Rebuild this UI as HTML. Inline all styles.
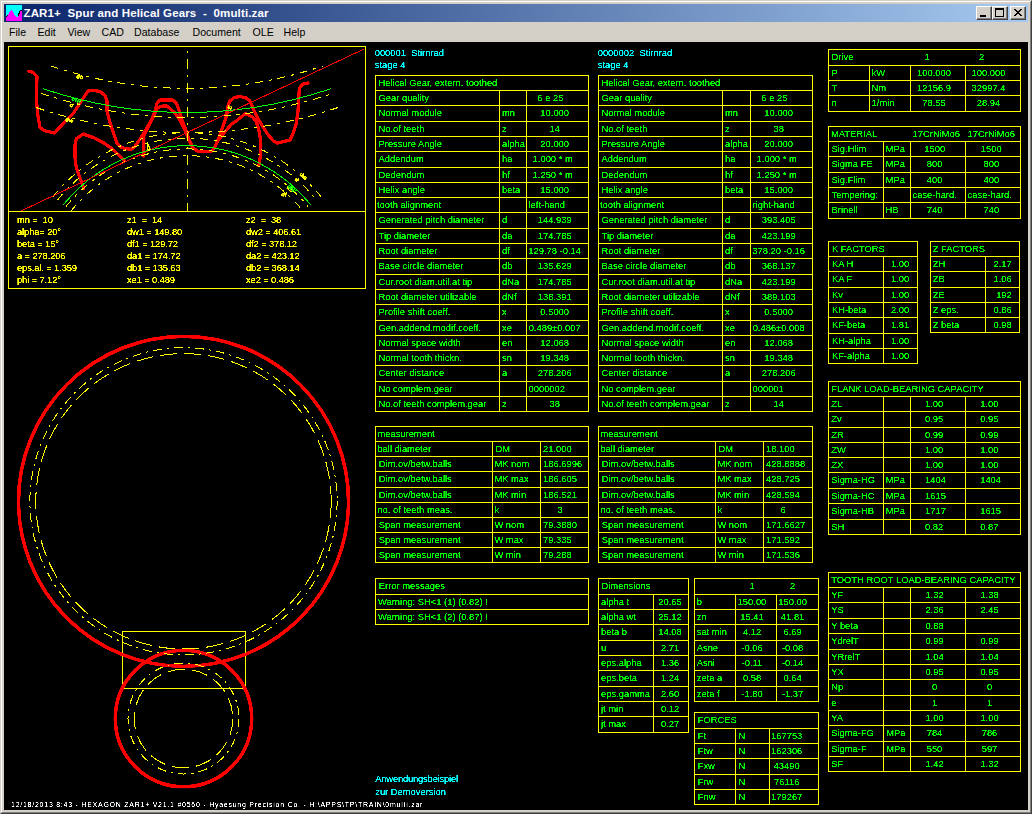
<!DOCTYPE html>
<html><head><meta charset="utf-8"><title>ZAR1+</title>
<style>
html,body{margin:0;padding:0}
body{width:1032px;height:814px;position:relative;overflow:hidden;background:#d4d0c8;font-family:"Liberation Sans",sans-serif}
.b{position:absolute}
#canvas{position:absolute;left:4px;top:42px;width:1024px;height:768px;background:#000;overflow:hidden;filter:url(#thr)}
#inner{position:absolute;left:-4px;top:-42px;width:1032px;height:814px;font-size:9.4px;line-height:1;color:#0f0}
#inner span{position:absolute;white-space:pre}
#title{position:absolute;left:4px;top:4px;width:1024px;height:18px;background:linear-gradient(to right,#0a246a,#a6caf0)}
#menu{position:absolute;left:0;top:0;font-size:10.6px;color:#000;line-height:13px}
.btn{position:absolute;top:2px;width:16px;height:14px;background:#d4d0c8;box-sizing:border-box;border:1px solid;border-color:#fff #404040 #404040 #fff;box-shadow:inset -1px -1px 0 #808080}
</style></head><body>
<svg width="0" height="0" style="position:absolute"><filter id="thr" x="0" y="0" width="100%" height="100%" color-interpolation-filters="sRGB"><feComponentTransfer><feFuncR type="table" tableValues="0 0 0 .25 .65 1 1 1 1 1 1"/><feFuncG type="table" tableValues="0 0 0 .25 .65 1 1 1 1 1 1"/><feFuncB type="table" tableValues="0 0 0 .25 .65 1 1 1 1 1 1"/></feComponentTransfer></filter><filter id="thg" x="0" y="0" width="100%" height="100%" color-interpolation-filters="sRGB"><feComponentTransfer><feFuncR type="discrete" tableValues="0 0 0 0 0 0 0 0 .78 .78 .78 .78 .78 .78 .78 .78 .78 .78 .78 .78"/><feFuncG type="discrete" tableValues="0 0 0 0 0 0 0 0 .78 .78 .78 .78 .78 .78 .78 .78 .78 .78 .78 .78"/><feFuncB type="discrete" tableValues="0 0 0 0 0 0 0 0 .78 .78 .78 .78 .78 .78 .78 .78 .78 .78 .78 .78"/></feComponentTransfer></filter></svg>
<div class="b" style="left:0;top:0;width:1032px;height:814px;box-sizing:border-box;border:1px solid;border-color:#d4d0c8 #404040 #404040 #d4d0c8"></div>
<div class="b" style="left:1px;top:1px;width:1030px;height:812px;box-sizing:border-box;border:1px solid;border-color:#fff #808080 #808080 #fff"></div>
<div id="title">
<svg class="b" style="left:2px;top:1px" width="16" height="16" shape-rendering="crispEdges"><rect width="16" height="16" fill="#0ff"/><path d="M0,16 V12 L1,11 L2,10 L3,8 L4,6 L5,5 L6,5 L7,7 L8,9 L9,11 L10,12 L11,12 L12,11 L13,8 L14,6 L16,5 V16 Z" fill="#f0f"/><path d="M0,12 L2,10 M12,11 L14,6 L16,5" stroke="#000" stroke-width="1" fill="none"/></svg>
<span class="b" style="left:19.5px;top:2px;color:#fff;font-weight:bold;font-size:11.5px;line-height:14px;white-space:pre;letter-spacing:0.13px">ZAR1+  Spur and Helical Gears  -  0multi.zar</span>
<div class="btn" style="left:972px"><div class="b" style="left:3px;top:8px;width:6px;height:2px;background:#000"></div></div>
<div class="btn" style="left:988px"><div class="b" style="left:2px;top:1px;width:9px;height:9px;box-sizing:border-box;border:1px solid #000;border-top-width:2px"></div></div>
<div class="btn" style="left:1006px"><svg class="b" style="left:3px;top:2px" width="8" height="7" shape-rendering="crispEdges"><path d="M0,0 L7,7 M1,0 L8,7 M7,0 L0,7 M8,0 L1,7" stroke="#000" stroke-width="1"/></svg></div>
</div>
<div id="menu"><span style="position:absolute;left:9px;top:26px">File</span><span style="position:absolute;left:37.5px;top:26px">Edit</span><span style="position:absolute;left:67.5px;top:26px">View</span><span style="position:absolute;left:101.5px;top:26px">CAD</span><span style="position:absolute;left:134px;top:26px">Database</span><span style="position:absolute;left:192.5px;top:26px">Document</span><span style="position:absolute;left:252.5px;top:26px">OLE</span><span style="position:absolute;left:283.5px;top:26px">Help</span></div>
<div id="canvas"><div id="inner">
<svg width="1032" height="814" style="position:absolute;left:0;top:0" shape-rendering="crispEdges">
<defs><clipPath id="cz"><rect x="9" y="47" width="356" height="164"/></clipPath></defs>
<rect x="375" y="75" width="214" height="1" fill="#ff0"/><rect x="375" y="90" width="214" height="1" fill="#ff0"/><rect x="375" y="105" width="214" height="1" fill="#ff0"/><rect x="375" y="121" width="214" height="1" fill="#ff0"/><rect x="375" y="136" width="214" height="1" fill="#ff0"/><rect x="375" y="151" width="214" height="1" fill="#ff0"/><rect x="375" y="167" width="214" height="1" fill="#ff0"/><rect x="375" y="182" width="214" height="1" fill="#ff0"/><rect x="375" y="197" width="214" height="1" fill="#ff0"/><rect x="375" y="212" width="214" height="1" fill="#ff0"/><rect x="375" y="228" width="214" height="1" fill="#ff0"/><rect x="375" y="243" width="214" height="1" fill="#ff0"/><rect x="375" y="258" width="214" height="1" fill="#ff0"/><rect x="375" y="274" width="214" height="1" fill="#ff0"/><rect x="375" y="289" width="214" height="1" fill="#ff0"/><rect x="375" y="304" width="214" height="1" fill="#ff0"/><rect x="375" y="320" width="214" height="1" fill="#ff0"/><rect x="375" y="335" width="214" height="1" fill="#ff0"/><rect x="375" y="350" width="214" height="1" fill="#ff0"/><rect x="375" y="365" width="214" height="1" fill="#ff0"/><rect x="375" y="381" width="214" height="1" fill="#ff0"/><rect x="375" y="396" width="214" height="1" fill="#ff0"/><rect x="375" y="411" width="214" height="1" fill="#ff0"/><rect x="375" y="75" width="1" height="337" fill="#ff0"/><rect x="588" y="75" width="1" height="337" fill="#ff0"/><rect x="499" y="90" width="1" height="16" fill="#ff0"/><rect x="526" y="90" width="1" height="16" fill="#ff0"/><rect x="499" y="105" width="1" height="17" fill="#ff0"/><rect x="526" y="105" width="1" height="17" fill="#ff0"/><rect x="499" y="121" width="1" height="16" fill="#ff0"/><rect x="526" y="121" width="1" height="16" fill="#ff0"/><rect x="499" y="136" width="1" height="16" fill="#ff0"/><rect x="526" y="136" width="1" height="16" fill="#ff0"/><rect x="499" y="151" width="1" height="17" fill="#ff0"/><rect x="526" y="151" width="1" height="17" fill="#ff0"/><rect x="499" y="167" width="1" height="16" fill="#ff0"/><rect x="526" y="167" width="1" height="16" fill="#ff0"/><rect x="499" y="182" width="1" height="16" fill="#ff0"/><rect x="526" y="182" width="1" height="16" fill="#ff0"/><rect x="499" y="197" width="1" height="16" fill="#ff0"/><rect x="526" y="197" width="1" height="16" fill="#ff0"/><rect x="499" y="212" width="1" height="17" fill="#ff0"/><rect x="526" y="212" width="1" height="17" fill="#ff0"/><rect x="499" y="228" width="1" height="16" fill="#ff0"/><rect x="526" y="228" width="1" height="16" fill="#ff0"/><rect x="499" y="243" width="1" height="16" fill="#ff0"/><rect x="526" y="243" width="1" height="16" fill="#ff0"/><rect x="499" y="258" width="1" height="17" fill="#ff0"/><rect x="526" y="258" width="1" height="17" fill="#ff0"/><rect x="499" y="274" width="1" height="16" fill="#ff0"/><rect x="526" y="274" width="1" height="16" fill="#ff0"/><rect x="499" y="289" width="1" height="16" fill="#ff0"/><rect x="526" y="289" width="1" height="16" fill="#ff0"/><rect x="499" y="304" width="1" height="17" fill="#ff0"/><rect x="526" y="304" width="1" height="17" fill="#ff0"/><rect x="499" y="320" width="1" height="16" fill="#ff0"/><rect x="526" y="320" width="1" height="16" fill="#ff0"/><rect x="499" y="335" width="1" height="16" fill="#ff0"/><rect x="526" y="335" width="1" height="16" fill="#ff0"/><rect x="499" y="350" width="1" height="16" fill="#ff0"/><rect x="526" y="350" width="1" height="16" fill="#ff0"/><rect x="499" y="365" width="1" height="17" fill="#ff0"/><rect x="526" y="365" width="1" height="17" fill="#ff0"/><rect x="499" y="381" width="1" height="16" fill="#ff0"/><rect x="526" y="381" width="1" height="16" fill="#ff0"/><rect x="499" y="396" width="1" height="16" fill="#ff0"/><rect x="526" y="396" width="1" height="16" fill="#ff0"/><rect x="598" y="75" width="215" height="1" fill="#ff0"/><rect x="598" y="90" width="215" height="1" fill="#ff0"/><rect x="598" y="105" width="215" height="1" fill="#ff0"/><rect x="598" y="121" width="215" height="1" fill="#ff0"/><rect x="598" y="136" width="215" height="1" fill="#ff0"/><rect x="598" y="151" width="215" height="1" fill="#ff0"/><rect x="598" y="167" width="215" height="1" fill="#ff0"/><rect x="598" y="182" width="215" height="1" fill="#ff0"/><rect x="598" y="197" width="215" height="1" fill="#ff0"/><rect x="598" y="212" width="215" height="1" fill="#ff0"/><rect x="598" y="228" width="215" height="1" fill="#ff0"/><rect x="598" y="243" width="215" height="1" fill="#ff0"/><rect x="598" y="258" width="215" height="1" fill="#ff0"/><rect x="598" y="274" width="215" height="1" fill="#ff0"/><rect x="598" y="289" width="215" height="1" fill="#ff0"/><rect x="598" y="304" width="215" height="1" fill="#ff0"/><rect x="598" y="320" width="215" height="1" fill="#ff0"/><rect x="598" y="335" width="215" height="1" fill="#ff0"/><rect x="598" y="350" width="215" height="1" fill="#ff0"/><rect x="598" y="365" width="215" height="1" fill="#ff0"/><rect x="598" y="381" width="215" height="1" fill="#ff0"/><rect x="598" y="396" width="215" height="1" fill="#ff0"/><rect x="598" y="411" width="215" height="1" fill="#ff0"/><rect x="598" y="75" width="1" height="337" fill="#ff0"/><rect x="812" y="75" width="1" height="337" fill="#ff0"/><rect x="722" y="90" width="1" height="16" fill="#ff0"/><rect x="750" y="90" width="1" height="16" fill="#ff0"/><rect x="722" y="105" width="1" height="17" fill="#ff0"/><rect x="750" y="105" width="1" height="17" fill="#ff0"/><rect x="722" y="121" width="1" height="16" fill="#ff0"/><rect x="750" y="121" width="1" height="16" fill="#ff0"/><rect x="722" y="136" width="1" height="16" fill="#ff0"/><rect x="750" y="136" width="1" height="16" fill="#ff0"/><rect x="722" y="151" width="1" height="17" fill="#ff0"/><rect x="750" y="151" width="1" height="17" fill="#ff0"/><rect x="722" y="167" width="1" height="16" fill="#ff0"/><rect x="750" y="167" width="1" height="16" fill="#ff0"/><rect x="722" y="182" width="1" height="16" fill="#ff0"/><rect x="750" y="182" width="1" height="16" fill="#ff0"/><rect x="722" y="197" width="1" height="16" fill="#ff0"/><rect x="750" y="197" width="1" height="16" fill="#ff0"/><rect x="722" y="212" width="1" height="17" fill="#ff0"/><rect x="750" y="212" width="1" height="17" fill="#ff0"/><rect x="722" y="228" width="1" height="16" fill="#ff0"/><rect x="750" y="228" width="1" height="16" fill="#ff0"/><rect x="722" y="243" width="1" height="16" fill="#ff0"/><rect x="750" y="243" width="1" height="16" fill="#ff0"/><rect x="722" y="258" width="1" height="17" fill="#ff0"/><rect x="750" y="258" width="1" height="17" fill="#ff0"/><rect x="722" y="274" width="1" height="16" fill="#ff0"/><rect x="750" y="274" width="1" height="16" fill="#ff0"/><rect x="722" y="289" width="1" height="16" fill="#ff0"/><rect x="750" y="289" width="1" height="16" fill="#ff0"/><rect x="722" y="304" width="1" height="17" fill="#ff0"/><rect x="750" y="304" width="1" height="17" fill="#ff0"/><rect x="722" y="320" width="1" height="16" fill="#ff0"/><rect x="750" y="320" width="1" height="16" fill="#ff0"/><rect x="722" y="335" width="1" height="16" fill="#ff0"/><rect x="750" y="335" width="1" height="16" fill="#ff0"/><rect x="722" y="350" width="1" height="16" fill="#ff0"/><rect x="750" y="350" width="1" height="16" fill="#ff0"/><rect x="722" y="365" width="1" height="17" fill="#ff0"/><rect x="750" y="365" width="1" height="17" fill="#ff0"/><rect x="722" y="381" width="1" height="16" fill="#ff0"/><rect x="750" y="381" width="1" height="16" fill="#ff0"/><rect x="722" y="396" width="1" height="16" fill="#ff0"/><rect x="750" y="396" width="1" height="16" fill="#ff0"/><rect x="375" y="426" width="214" height="1" fill="#ff0"/><rect x="375" y="441" width="214" height="1" fill="#ff0"/><rect x="375" y="456" width="214" height="1" fill="#ff0"/><rect x="375" y="471" width="214" height="1" fill="#ff0"/><rect x="375" y="487" width="214" height="1" fill="#ff0"/><rect x="375" y="502" width="214" height="1" fill="#ff0"/><rect x="375" y="517" width="214" height="1" fill="#ff0"/><rect x="375" y="532" width="214" height="1" fill="#ff0"/><rect x="375" y="547" width="214" height="1" fill="#ff0"/><rect x="375" y="562" width="214" height="1" fill="#ff0"/><rect x="375" y="426" width="1" height="137" fill="#ff0"/><rect x="588" y="426" width="1" height="137" fill="#ff0"/><rect x="492" y="441" width="1" height="16" fill="#ff0"/><rect x="540" y="441" width="1" height="16" fill="#ff0"/><rect x="492" y="456" width="1" height="16" fill="#ff0"/><rect x="540" y="456" width="1" height="16" fill="#ff0"/><rect x="492" y="471" width="1" height="17" fill="#ff0"/><rect x="540" y="471" width="1" height="17" fill="#ff0"/><rect x="492" y="487" width="1" height="16" fill="#ff0"/><rect x="540" y="487" width="1" height="16" fill="#ff0"/><rect x="492" y="502" width="1" height="16" fill="#ff0"/><rect x="540" y="502" width="1" height="16" fill="#ff0"/><rect x="492" y="517" width="1" height="16" fill="#ff0"/><rect x="540" y="517" width="1" height="16" fill="#ff0"/><rect x="492" y="532" width="1" height="16" fill="#ff0"/><rect x="540" y="532" width="1" height="16" fill="#ff0"/><rect x="492" y="547" width="1" height="16" fill="#ff0"/><rect x="540" y="547" width="1" height="16" fill="#ff0"/><rect x="598" y="426" width="215" height="1" fill="#ff0"/><rect x="598" y="441" width="215" height="1" fill="#ff0"/><rect x="598" y="456" width="215" height="1" fill="#ff0"/><rect x="598" y="471" width="215" height="1" fill="#ff0"/><rect x="598" y="487" width="215" height="1" fill="#ff0"/><rect x="598" y="502" width="215" height="1" fill="#ff0"/><rect x="598" y="517" width="215" height="1" fill="#ff0"/><rect x="598" y="532" width="215" height="1" fill="#ff0"/><rect x="598" y="547" width="215" height="1" fill="#ff0"/><rect x="598" y="562" width="215" height="1" fill="#ff0"/><rect x="598" y="426" width="1" height="137" fill="#ff0"/><rect x="812" y="426" width="1" height="137" fill="#ff0"/><rect x="715" y="441" width="1" height="16" fill="#ff0"/><rect x="763" y="441" width="1" height="16" fill="#ff0"/><rect x="715" y="456" width="1" height="16" fill="#ff0"/><rect x="763" y="456" width="1" height="16" fill="#ff0"/><rect x="715" y="471" width="1" height="17" fill="#ff0"/><rect x="763" y="471" width="1" height="17" fill="#ff0"/><rect x="715" y="487" width="1" height="16" fill="#ff0"/><rect x="763" y="487" width="1" height="16" fill="#ff0"/><rect x="715" y="502" width="1" height="16" fill="#ff0"/><rect x="763" y="502" width="1" height="16" fill="#ff0"/><rect x="715" y="517" width="1" height="16" fill="#ff0"/><rect x="763" y="517" width="1" height="16" fill="#ff0"/><rect x="715" y="532" width="1" height="16" fill="#ff0"/><rect x="763" y="532" width="1" height="16" fill="#ff0"/><rect x="715" y="547" width="1" height="16" fill="#ff0"/><rect x="763" y="547" width="1" height="16" fill="#ff0"/><rect x="375" y="578" width="214" height="1" fill="#ff0"/><rect x="375" y="594" width="214" height="1" fill="#ff0"/><rect x="375" y="609" width="214" height="1" fill="#ff0"/><rect x="375" y="624" width="214" height="1" fill="#ff0"/><rect x="375" y="578" width="1" height="47" fill="#ff0"/><rect x="588" y="578" width="1" height="47" fill="#ff0"/><rect x="598" y="578" width="91" height="1" fill="#ff0"/><rect x="598" y="594" width="91" height="1" fill="#ff0"/><rect x="598" y="609" width="91" height="1" fill="#ff0"/><rect x="598" y="624" width="91" height="1" fill="#ff0"/><rect x="598" y="640" width="91" height="1" fill="#ff0"/><rect x="598" y="655" width="91" height="1" fill="#ff0"/><rect x="598" y="670" width="91" height="1" fill="#ff0"/><rect x="598" y="686" width="91" height="1" fill="#ff0"/><rect x="598" y="701" width="91" height="1" fill="#ff0"/><rect x="598" y="716" width="91" height="1" fill="#ff0"/><rect x="598" y="732" width="91" height="1" fill="#ff0"/><rect x="598" y="578" width="1" height="155" fill="#ff0"/><rect x="688" y="578" width="1" height="155" fill="#ff0"/><rect x="653" y="594" width="1" height="16" fill="#ff0"/><rect x="653" y="609" width="1" height="16" fill="#ff0"/><rect x="653" y="624" width="1" height="17" fill="#ff0"/><rect x="653" y="640" width="1" height="16" fill="#ff0"/><rect x="653" y="655" width="1" height="16" fill="#ff0"/><rect x="653" y="670" width="1" height="17" fill="#ff0"/><rect x="653" y="686" width="1" height="16" fill="#ff0"/><rect x="653" y="701" width="1" height="16" fill="#ff0"/><rect x="653" y="716" width="1" height="17" fill="#ff0"/><rect x="694" y="578" width="125" height="1" fill="#ff0"/><rect x="694" y="594" width="125" height="1" fill="#ff0"/><rect x="694" y="609" width="125" height="1" fill="#ff0"/><rect x="694" y="624" width="125" height="1" fill="#ff0"/><rect x="694" y="640" width="125" height="1" fill="#ff0"/><rect x="694" y="655" width="125" height="1" fill="#ff0"/><rect x="694" y="670" width="125" height="1" fill="#ff0"/><rect x="694" y="686" width="125" height="1" fill="#ff0"/><rect x="694" y="701" width="125" height="1" fill="#ff0"/><rect x="694" y="578" width="1" height="124" fill="#ff0"/><rect x="818" y="578" width="1" height="124" fill="#ff0"/><rect x="735" y="594" width="1" height="16" fill="#ff0"/><rect x="776" y="594" width="1" height="16" fill="#ff0"/><rect x="735" y="609" width="1" height="16" fill="#ff0"/><rect x="776" y="609" width="1" height="16" fill="#ff0"/><rect x="735" y="624" width="1" height="17" fill="#ff0"/><rect x="776" y="624" width="1" height="17" fill="#ff0"/><rect x="735" y="640" width="1" height="16" fill="#ff0"/><rect x="776" y="640" width="1" height="16" fill="#ff0"/><rect x="735" y="655" width="1" height="16" fill="#ff0"/><rect x="776" y="655" width="1" height="16" fill="#ff0"/><rect x="735" y="670" width="1" height="17" fill="#ff0"/><rect x="776" y="670" width="1" height="17" fill="#ff0"/><rect x="735" y="686" width="1" height="16" fill="#ff0"/><rect x="776" y="686" width="1" height="16" fill="#ff0"/><rect x="694" y="712" width="125" height="1" fill="#ff0"/><rect x="694" y="728" width="125" height="1" fill="#ff0"/><rect x="694" y="743" width="125" height="1" fill="#ff0"/><rect x="694" y="758" width="125" height="1" fill="#ff0"/><rect x="694" y="774" width="125" height="1" fill="#ff0"/><rect x="694" y="789" width="125" height="1" fill="#ff0"/><rect x="694" y="804" width="125" height="1" fill="#ff0"/><rect x="694" y="712" width="1" height="93" fill="#ff0"/><rect x="818" y="712" width="1" height="93" fill="#ff0"/><rect x="735" y="728" width="1" height="16" fill="#ff0"/><rect x="769" y="728" width="1" height="16" fill="#ff0"/><rect x="735" y="743" width="1" height="16" fill="#ff0"/><rect x="769" y="743" width="1" height="16" fill="#ff0"/><rect x="735" y="758" width="1" height="17" fill="#ff0"/><rect x="769" y="758" width="1" height="17" fill="#ff0"/><rect x="735" y="774" width="1" height="16" fill="#ff0"/><rect x="769" y="774" width="1" height="16" fill="#ff0"/><rect x="735" y="789" width="1" height="16" fill="#ff0"/><rect x="769" y="789" width="1" height="16" fill="#ff0"/><rect x="828" y="49" width="193" height="1" fill="#ff0"/><rect x="828" y="65" width="193" height="1" fill="#ff0"/><rect x="828" y="80" width="193" height="1" fill="#ff0"/><rect x="828" y="95" width="193" height="1" fill="#ff0"/><rect x="828" y="111" width="193" height="1" fill="#ff0"/><rect x="828" y="49" width="1" height="63" fill="#ff0"/><rect x="1020" y="49" width="1" height="63" fill="#ff0"/><rect x="869" y="65" width="1" height="16" fill="#ff0"/><rect x="910" y="65" width="1" height="16" fill="#ff0"/><rect x="965" y="65" width="1" height="16" fill="#ff0"/><rect x="869" y="80" width="1" height="16" fill="#ff0"/><rect x="910" y="80" width="1" height="16" fill="#ff0"/><rect x="965" y="80" width="1" height="16" fill="#ff0"/><rect x="869" y="95" width="1" height="17" fill="#ff0"/><rect x="910" y="95" width="1" height="17" fill="#ff0"/><rect x="965" y="95" width="1" height="17" fill="#ff0"/><rect x="828" y="126" width="193" height="1" fill="#ff0"/><rect x="828" y="141" width="193" height="1" fill="#ff0"/><rect x="828" y="156" width="193" height="1" fill="#ff0"/><rect x="828" y="172" width="193" height="1" fill="#ff0"/><rect x="828" y="187" width="193" height="1" fill="#ff0"/><rect x="828" y="202" width="193" height="1" fill="#ff0"/><rect x="828" y="218" width="193" height="1" fill="#ff0"/><rect x="828" y="126" width="1" height="93" fill="#ff0"/><rect x="1020" y="126" width="1" height="93" fill="#ff0"/><rect x="883" y="141" width="1" height="16" fill="#ff0"/><rect x="910" y="141" width="1" height="16" fill="#ff0"/><rect x="965" y="141" width="1" height="16" fill="#ff0"/><rect x="883" y="156" width="1" height="17" fill="#ff0"/><rect x="910" y="156" width="1" height="17" fill="#ff0"/><rect x="965" y="156" width="1" height="17" fill="#ff0"/><rect x="883" y="172" width="1" height="16" fill="#ff0"/><rect x="910" y="172" width="1" height="16" fill="#ff0"/><rect x="965" y="172" width="1" height="16" fill="#ff0"/><rect x="883" y="187" width="1" height="16" fill="#ff0"/><rect x="910" y="187" width="1" height="16" fill="#ff0"/><rect x="965" y="187" width="1" height="16" fill="#ff0"/><rect x="883" y="202" width="1" height="17" fill="#ff0"/><rect x="910" y="202" width="1" height="17" fill="#ff0"/><rect x="965" y="202" width="1" height="17" fill="#ff0"/><rect x="828" y="241" width="90" height="1" fill="#ff0"/><rect x="828" y="256" width="90" height="1" fill="#ff0"/><rect x="828" y="271" width="90" height="1" fill="#ff0"/><rect x="828" y="287" width="90" height="1" fill="#ff0"/><rect x="828" y="302" width="90" height="1" fill="#ff0"/><rect x="828" y="317" width="90" height="1" fill="#ff0"/><rect x="828" y="333" width="90" height="1" fill="#ff0"/><rect x="828" y="348" width="90" height="1" fill="#ff0"/><rect x="828" y="363" width="90" height="1" fill="#ff0"/><rect x="828" y="241" width="1" height="123" fill="#ff0"/><rect x="917" y="241" width="1" height="123" fill="#ff0"/><rect x="883" y="256" width="1" height="16" fill="#ff0"/><rect x="883" y="271" width="1" height="17" fill="#ff0"/><rect x="883" y="287" width="1" height="16" fill="#ff0"/><rect x="883" y="302" width="1" height="16" fill="#ff0"/><rect x="883" y="317" width="1" height="17" fill="#ff0"/><rect x="883" y="333" width="1" height="16" fill="#ff0"/><rect x="883" y="348" width="1" height="16" fill="#ff0"/><rect x="930" y="241" width="90" height="1" fill="#ff0"/><rect x="930" y="256" width="90" height="1" fill="#ff0"/><rect x="930" y="271" width="90" height="1" fill="#ff0"/><rect x="930" y="287" width="90" height="1" fill="#ff0"/><rect x="930" y="302" width="90" height="1" fill="#ff0"/><rect x="930" y="317" width="90" height="1" fill="#ff0"/><rect x="930" y="332" width="90" height="1" fill="#ff0"/><rect x="930" y="241" width="1" height="92" fill="#ff0"/><rect x="1019" y="241" width="1" height="92" fill="#ff0"/><rect x="985" y="256" width="1" height="16" fill="#ff0"/><rect x="985" y="271" width="1" height="17" fill="#ff0"/><rect x="985" y="287" width="1" height="16" fill="#ff0"/><rect x="985" y="302" width="1" height="16" fill="#ff0"/><rect x="985" y="317" width="1" height="16" fill="#ff0"/><rect x="828" y="381" width="193" height="1" fill="#ff0"/><rect x="828" y="396" width="193" height="1" fill="#ff0"/><rect x="828" y="411" width="193" height="1" fill="#ff0"/><rect x="828" y="427" width="193" height="1" fill="#ff0"/><rect x="828" y="442" width="193" height="1" fill="#ff0"/><rect x="828" y="457" width="193" height="1" fill="#ff0"/><rect x="828" y="472" width="193" height="1" fill="#ff0"/><rect x="828" y="488" width="193" height="1" fill="#ff0"/><rect x="828" y="503" width="193" height="1" fill="#ff0"/><rect x="828" y="519" width="193" height="1" fill="#ff0"/><rect x="828" y="534" width="193" height="1" fill="#ff0"/><rect x="828" y="381" width="1" height="154" fill="#ff0"/><rect x="1020" y="381" width="1" height="154" fill="#ff0"/><rect x="883" y="396" width="1" height="16" fill="#ff0"/><rect x="910" y="396" width="1" height="16" fill="#ff0"/><rect x="965" y="396" width="1" height="16" fill="#ff0"/><rect x="883" y="411" width="1" height="17" fill="#ff0"/><rect x="910" y="411" width="1" height="17" fill="#ff0"/><rect x="965" y="411" width="1" height="17" fill="#ff0"/><rect x="883" y="427" width="1" height="16" fill="#ff0"/><rect x="910" y="427" width="1" height="16" fill="#ff0"/><rect x="965" y="427" width="1" height="16" fill="#ff0"/><rect x="883" y="442" width="1" height="16" fill="#ff0"/><rect x="910" y="442" width="1" height="16" fill="#ff0"/><rect x="965" y="442" width="1" height="16" fill="#ff0"/><rect x="883" y="457" width="1" height="16" fill="#ff0"/><rect x="910" y="457" width="1" height="16" fill="#ff0"/><rect x="965" y="457" width="1" height="16" fill="#ff0"/><rect x="883" y="472" width="1" height="17" fill="#ff0"/><rect x="910" y="472" width="1" height="17" fill="#ff0"/><rect x="965" y="472" width="1" height="17" fill="#ff0"/><rect x="883" y="488" width="1" height="16" fill="#ff0"/><rect x="910" y="488" width="1" height="16" fill="#ff0"/><rect x="965" y="488" width="1" height="16" fill="#ff0"/><rect x="883" y="503" width="1" height="17" fill="#ff0"/><rect x="910" y="503" width="1" height="17" fill="#ff0"/><rect x="965" y="503" width="1" height="17" fill="#ff0"/><rect x="883" y="519" width="1" height="16" fill="#ff0"/><rect x="910" y="519" width="1" height="16" fill="#ff0"/><rect x="965" y="519" width="1" height="16" fill="#ff0"/><rect x="828" y="572" width="193" height="1" fill="#ff0"/><rect x="828" y="587" width="193" height="1" fill="#ff0"/><rect x="828" y="602" width="193" height="1" fill="#ff0"/><rect x="828" y="618" width="193" height="1" fill="#ff0"/><rect x="828" y="633" width="193" height="1" fill="#ff0"/><rect x="828" y="649" width="193" height="1" fill="#ff0"/><rect x="828" y="664" width="193" height="1" fill="#ff0"/><rect x="828" y="679" width="193" height="1" fill="#ff0"/><rect x="828" y="695" width="193" height="1" fill="#ff0"/><rect x="828" y="710" width="193" height="1" fill="#ff0"/><rect x="828" y="725" width="193" height="1" fill="#ff0"/><rect x="828" y="741" width="193" height="1" fill="#ff0"/><rect x="828" y="756" width="193" height="1" fill="#ff0"/><rect x="828" y="771" width="193" height="1" fill="#ff0"/><rect x="828" y="572" width="1" height="200" fill="#ff0"/><rect x="1020" y="572" width="1" height="200" fill="#ff0"/><rect x="883" y="587" width="1" height="16" fill="#ff0"/><rect x="910" y="587" width="1" height="16" fill="#ff0"/><rect x="965" y="587" width="1" height="16" fill="#ff0"/><rect x="883" y="602" width="1" height="17" fill="#ff0"/><rect x="910" y="602" width="1" height="17" fill="#ff0"/><rect x="965" y="602" width="1" height="17" fill="#ff0"/><rect x="883" y="618" width="1" height="16" fill="#ff0"/><rect x="910" y="618" width="1" height="16" fill="#ff0"/><rect x="965" y="618" width="1" height="16" fill="#ff0"/><rect x="883" y="633" width="1" height="17" fill="#ff0"/><rect x="910" y="633" width="1" height="17" fill="#ff0"/><rect x="965" y="633" width="1" height="17" fill="#ff0"/><rect x="883" y="649" width="1" height="16" fill="#ff0"/><rect x="910" y="649" width="1" height="16" fill="#ff0"/><rect x="965" y="649" width="1" height="16" fill="#ff0"/><rect x="883" y="664" width="1" height="16" fill="#ff0"/><rect x="910" y="664" width="1" height="16" fill="#ff0"/><rect x="965" y="664" width="1" height="16" fill="#ff0"/><rect x="883" y="679" width="1" height="17" fill="#ff0"/><rect x="910" y="679" width="1" height="17" fill="#ff0"/><rect x="965" y="679" width="1" height="17" fill="#ff0"/><rect x="883" y="695" width="1" height="16" fill="#ff0"/><rect x="910" y="695" width="1" height="16" fill="#ff0"/><rect x="965" y="695" width="1" height="16" fill="#ff0"/><rect x="883" y="710" width="1" height="16" fill="#ff0"/><rect x="910" y="710" width="1" height="16" fill="#ff0"/><rect x="965" y="710" width="1" height="16" fill="#ff0"/><rect x="883" y="725" width="1" height="17" fill="#ff0"/><rect x="910" y="725" width="1" height="17" fill="#ff0"/><rect x="965" y="725" width="1" height="17" fill="#ff0"/><rect x="883" y="741" width="1" height="16" fill="#ff0"/><rect x="910" y="741" width="1" height="16" fill="#ff0"/><rect x="965" y="741" width="1" height="16" fill="#ff0"/><rect x="883" y="756" width="1" height="16" fill="#ff0"/><rect x="910" y="756" width="1" height="16" fill="#ff0"/><rect x="965" y="756" width="1" height="16" fill="#ff0"/><rect x="8" y="46" width="358" height="1" fill="#ff0"/><rect x="8" y="211" width="358" height="1" fill="#ff0"/><rect x="8" y="288" width="358" height="1" fill="#ff0"/><rect x="8" y="46" width="1" height="243" fill="#ff0"/><rect x="365" y="46" width="1" height="243" fill="#ff0"/><rect x="122" y="631" width="124" height="1" fill="#ff0"/><rect x="122" y="688" width="124" height="1" fill="#ff0"/><rect x="122" y="631" width="1" height="58" fill="#ff0"/><rect x="245" y="631" width="1" height="58" fill="#ff0"/>
<g clip-path="url(#cz)" shape-rendering="geometricPrecision"><path d="M28.7,71.4 L33.0,72.3 L37.0,76.7 L36.6,87.4 L36.6,102.4 L38.0,116.0 L40.0,127.5 L44.3,130.6 L54.4,133.0 L63.0,123.7 L73.0,113.7 L82.0,100.0 L88.0,91.0 L93.0,90.2 L100.0,91.4 L105.0,95.5 L107.0,101.0 L107.0,111.0 L109.5,121.0 L113.3,132.5 L117.0,143.2 L120.8,147.0 L126.0,148.8 L131.3,149.2 L135.0,146.4 L140.0,139.0 L146.3,129.0 L152.0,119.0 L155.7,108.9 L157.0,103.2 L160.0,100.0 L166.4,99.7 L172.6,100.0 L176.4,103.2 L179.0,110.0 L182.0,120.0 L186.4,131.4 L189.0,140.0 L192.7,147.7 L197.7,151.2 L205.2,151.5 L211.5,151.2 L214.6,147.7 L218.4,139.0 L222.0,129.0 L226.0,117.6 L228.0,106.3 L229.6,101.3 L234.0,97.6 L240.3,96.6 L245.3,97.6 L249.7,100.7 L252.2,106.3 L256.0,115.0 L261.0,123.7 L267.3,133.7 L273.6,141.2 L277.4,143.1 L283.6,141.5 L290.0,140.0 L293.0,133.7 L296.2,123.7 L298.0,111.2 L298.7,98.6 L299.3,88.6 L302.4,84.2 L308.0,83.0" stroke="#f00" stroke-width="3.0" fill="none" stroke-linejoin="round" stroke-linecap="round"/><path d="M83.8,188.3 L79.4,176.4 L76.3,167.6 L75.0,157.6 L75.0,145.0 L76.3,138.8 L83.2,134.0 L93.2,137.5 L103.2,142.6 L112.0,148.8 L118.3,154.5 L124.5,160.7" stroke="#f00" stroke-width="3.0" fill="none" stroke-linejoin="round" stroke-linecap="round"/><path d="M143.8,156.0 L143.8,136.0 L148.0,127.0 L153.0,117.0 L157.6,107.6 L161.3,106.3 L166.4,105.7 L169.5,108.2 L175.0,113.2 L180.0,120.0 L185.0,130.0 L189.0,140.0 L192.7,147.7" stroke="#f00" stroke-width="3.0" fill="none" stroke-linejoin="round" stroke-linecap="round"/><path d="M217.0,142.0 L220.2,137.7 L225.3,131.4 L231.5,124.0 L236.0,121.2 L245.4,113.7 L252.3,116.8 L256.0,121.2 L258.6,128.7 L260.4,138.7 L260.8,145.0 L260.4,156.3 L258.8,165.7" stroke="#f00" stroke-width="3.0" fill="none" stroke-linejoin="round" stroke-linecap="round"/><path d="M42.8,88.6 A447.5,447.5 0 0 0 331.2,88.6" stroke="#0f0" stroke-width="1" fill="none" shape-rendering="crispEdges"/><path d="M63.3,204.7 A159.2,159.2 0 0 1 310.7,204.7" stroke="#0f0" stroke-width="1" fill="none" shape-rendering="crispEdges"/><path d="M50.6,65.8 A423.4,423.4 0 0 0 323.4,65.8" stroke="#ff0" stroke-width="1" fill="none" stroke-dasharray="8 6 3 6" shape-rendering="crispEdges"/><path d="M41.2,93.3 A452.4,452.4 0 0 0 332.8,93.3" stroke="#ff0" stroke-width="1" fill="none" stroke-dasharray="8 6 3 6" shape-rendering="crispEdges"/><path d="M36.3,107.6 A467.6,467.6 0 0 0 337.7,107.6" stroke="#ff0" stroke-width="1" fill="none" stroke-dasharray="8 6 3 6" shape-rendering="crispEdges"/><path d="M71.0,211.0 A149.2,149.2 0 0 1 303.0,211.0" stroke="#ff0" stroke-width="1" fill="none" stroke-dasharray="8 6 3 6" shape-rendering="crispEdges"/><path d="M65.8,206.7 A156.0,156.0 0 0 1 308.2,206.7" stroke="#ff0" stroke-width="1" fill="none" stroke-dasharray="8 6 3 6" shape-rendering="crispEdges"/><path d="M57.5,200.0 A166.7,166.7 0 0 1 316.5,200.0" stroke="#ff0" stroke-width="1" fill="none" stroke-dasharray="8 6 3 6" shape-rendering="crispEdges"/><path d="M53.1,196.5 A172.3,172.3 0 0 1 320.9,196.5" stroke="#ff0" stroke-width="1" fill="none" stroke-dasharray="8 6 3 6" shape-rendering="crispEdges"/><path d="M187.5,35 V211" stroke="#ff0" stroke-width="1" fill="none" stroke-dasharray="10 5.5 2.5 6" shape-rendering="crispEdges"/><path d="M21,211 L364,49" stroke="#f00" stroke-width="1" fill="none" shape-rendering="crispEdges"/><text x="76" y="78" fill="#ff0" font-size="5.8" font-family="Liberation Sans" font-weight="bold" transform="rotate(14 76 78)">db</text><text x="69" y="106" fill="#ff0" font-size="5.8" font-family="Liberation Sans" font-weight="bold" transform="rotate(30 69 106)">d</text><text x="65" y="121" fill="#ff0" font-size="5.8" font-family="Liberation Sans" font-weight="bold" transform="rotate(14 65 121)">dw</text><text x="71" y="100" fill="#0f0" font-size="5.8" font-family="Liberation Sans" font-weight="bold" transform="rotate(25 71 100)">dNf</text><text x="231" y="110" fill="#ff0" font-size="5.8" font-family="Liberation Sans" font-weight="bold" transform="rotate(-70 231 110)">E</text><path d="M147.5,143 L150.5,150 L147.5,150 Z" stroke="#ff0" stroke-width="1" fill="none"/><text x="299" y="175" fill="#ff0" font-size="5.8" font-family="Liberation Sans" font-weight="bold" transform="rotate(40 299 175)">dw</text><text x="294" y="180" fill="#ff0" font-size="5.8" font-family="Liberation Sans" font-weight="bold" transform="rotate(40 294 180)">d</text><text x="286" y="188" fill="#ff0" font-size="5.8" font-family="Liberation Sans" font-weight="bold" transform="rotate(40 286 188)">db</text><text x="287" y="187" fill="#0f0" font-size="5.8" font-family="Liberation Sans" font-weight="bold" transform="rotate(40 287 187)">dNf</text><text x="281" y="196" fill="#ff0" font-size="5.8" font-family="Liberation Sans" font-weight="bold" transform="rotate(10 281 196)">df</text></g>
<g shape-rendering="geometricPrecision"><circle cx="183.5" cy="501.3" r="165" stroke="#f00" stroke-width="3.3" fill="none"/><circle cx="183.5" cy="718.5" r="68.2" stroke="#f00" stroke-width="3.3" fill="none"/><circle cx="183.5" cy="501.3" r="153.6" stroke="#ff0" stroke-width="1" fill="none" stroke-dasharray="9 5 2 5" shape-rendering="crispEdges"/><circle cx="183.5" cy="501.3" r="147.7" stroke="#ff0" stroke-width="1" fill="none" stroke-dasharray="17 7" shape-rendering="crispEdges"/><circle cx="183.5" cy="718.5" r="55.5" stroke="#ff0" stroke-width="1" fill="none" stroke-dasharray="9 5 2 5" shape-rendering="crispEdges"/><circle cx="183.5" cy="718.5" r="49.3" stroke="#ff0" stroke-width="1" fill="none" stroke-dasharray="17 7" shape-rendering="crispEdges"/></g>
</svg>
<span style="top:77.94px;left:378.50px;">Helical Gear, extern. toothed</span><span style="top:92.94px;left:378.50px;">Gear quality</span><span style="top:92.94px;left:450.40px;width:200px;text-align:center;">6 e 25</span><span style="top:107.94px;left:378.50px;">Normal module</span><span style="top:107.94px;left:502.00px;">mn</span><span style="top:107.94px;left:454.70px;width:200px;text-align:center;">10.000</span><span style="top:123.94px;left:378.50px;">No.of teeth</span><span style="top:123.94px;left:502.00px;">z</span><span style="top:123.94px;left:454.70px;width:200px;text-align:center;">14</span><span style="top:138.94px;left:378.50px;">Pressure Angle</span><span style="top:138.94px;left:502.00px;">alpha</span><span style="top:138.94px;left:454.70px;width:200px;text-align:center;">20.000</span><span style="top:153.94px;left:378.50px;">Addendum</span><span style="top:153.94px;left:502.00px;">ha</span><span style="top:153.94px;left:452.70px;width:200px;text-align:center;">1.000 * m</span><span style="top:169.94px;left:378.50px;">Dedendum</span><span style="top:169.94px;left:502.00px;">hf</span><span style="top:169.94px;left:452.70px;width:200px;text-align:center;">1.250 * m</span><span style="top:184.94px;left:378.50px;">Helix angle</span><span style="top:184.94px;left:502.00px;">beta</span><span style="top:184.94px;left:454.70px;width:200px;text-align:center;">15.000</span><span style="top:199.94px;left:377.00px;">tooth alignment</span><span style="top:199.94px;left:528.50px;">left-hand</span><span style="top:214.94px;left:378.50px;">Generated pitch diameter</span><span style="top:214.94px;left:502.00px;">d</span><span style="top:214.94px;left:454.70px;width:200px;text-align:center;">144.939</span><span style="top:230.94px;left:378.50px;">Tip diameter</span><span style="top:230.94px;left:502.00px;">da</span><span style="top:230.94px;left:454.70px;width:200px;text-align:center;">174.785</span><span style="top:245.94px;left:378.50px;">Root diameter</span><span style="top:245.94px;left:502.00px;">df</span><span style="top:245.94px;left:454.70px;width:200px;text-align:center;">129.78 -0.14</span><span style="top:260.94px;left:378.50px;">Base circle diameter</span><span style="top:260.94px;left:502.00px;">db</span><span style="top:260.94px;left:454.70px;width:200px;text-align:center;">135.629</span><span style="top:276.94px;left:378.50px;">Cur.root diam.util.at tip</span><span style="top:276.94px;left:502.00px;">dNa</span><span style="top:276.94px;left:454.70px;width:200px;text-align:center;">174.785</span><span style="top:291.94px;left:378.50px;">Root diameter utilizable</span><span style="top:291.94px;left:502.00px;">dNf</span><span style="top:291.94px;left:454.70px;width:200px;text-align:center;">138.391</span><span style="top:306.94px;left:378.50px;">Profile shift coeff.</span><span style="top:306.94px;left:502.00px;">x</span><span style="top:306.94px;left:454.70px;width:200px;text-align:center;">0.5000</span><span style="top:322.94px;left:378.50px;">Gen.addend.modif.coeff.</span><span style="top:322.94px;left:502.00px;">xe</span><span style="top:322.94px;left:454.70px;width:200px;text-align:center;">0.489±0.007</span><span style="top:337.94px;left:378.50px;">Normal space width</span><span style="top:337.94px;left:502.00px;">en</span><span style="top:337.94px;left:454.70px;width:200px;text-align:center;">12.068</span><span style="top:352.94px;left:378.50px;">Normal tooth thickn.</span><span style="top:352.94px;left:502.00px;">sn</span><span style="top:352.94px;left:454.70px;width:200px;text-align:center;">19.348</span><span style="top:367.94px;left:378.50px;">Center distance</span><span style="top:367.94px;left:502.00px;">a</span><span style="top:367.94px;left:454.70px;width:200px;text-align:center;">278.206</span><span style="top:383.94px;left:378.50px;">No complem.gear</span><span style="top:383.94px;left:528.50px;">0000002</span><span style="top:398.94px;left:378.50px;">No.of teeth complem.gear</span><span style="top:398.94px;left:502.00px;">z</span><span style="top:398.94px;left:454.70px;width:200px;text-align:center;">38</span><span style="top:77.94px;left:601.50px;">Helical Gear, extern. toothed</span><span style="top:92.94px;left:601.50px;">Gear quality</span><span style="top:92.94px;left:674.40px;width:200px;text-align:center;">6 e 25</span><span style="top:107.94px;left:601.50px;">Normal module</span><span style="top:107.94px;left:725.00px;">mn</span><span style="top:107.94px;left:678.70px;width:200px;text-align:center;">10.000</span><span style="top:123.94px;left:601.50px;">No.of teeth</span><span style="top:123.94px;left:725.00px;">z</span><span style="top:123.94px;left:678.70px;width:200px;text-align:center;">38</span><span style="top:138.94px;left:601.50px;">Pressure Angle</span><span style="top:138.94px;left:725.00px;">alpha</span><span style="top:138.94px;left:678.70px;width:200px;text-align:center;">20.000</span><span style="top:153.94px;left:601.50px;">Addendum</span><span style="top:153.94px;left:725.00px;">ha</span><span style="top:153.94px;left:676.70px;width:200px;text-align:center;">1.000 * m</span><span style="top:169.94px;left:601.50px;">Dedendum</span><span style="top:169.94px;left:725.00px;">hf</span><span style="top:169.94px;left:676.70px;width:200px;text-align:center;">1.250 * m</span><span style="top:184.94px;left:601.50px;">Helix angle</span><span style="top:184.94px;left:725.00px;">beta</span><span style="top:184.94px;left:678.70px;width:200px;text-align:center;">15.000</span><span style="top:199.94px;left:600.00px;">tooth alignment</span><span style="top:199.94px;left:752.50px;">right-hand</span><span style="top:214.94px;left:601.50px;">Generated pitch diameter</span><span style="top:214.94px;left:725.00px;">d</span><span style="top:214.94px;left:678.70px;width:200px;text-align:center;">393.405</span><span style="top:230.94px;left:601.50px;">Tip diameter</span><span style="top:230.94px;left:725.00px;">da</span><span style="top:230.94px;left:678.70px;width:200px;text-align:center;">423.199</span><span style="top:245.94px;left:601.50px;">Root diameter</span><span style="top:245.94px;left:725.00px;">df</span><span style="top:245.94px;left:678.70px;width:200px;text-align:center;">378.20 -0.16</span><span style="top:260.94px;left:601.50px;">Base circle diameter</span><span style="top:260.94px;left:725.00px;">db</span><span style="top:260.94px;left:678.70px;width:200px;text-align:center;">368.137</span><span style="top:276.94px;left:601.50px;">Cur.root diam.util.at tip</span><span style="top:276.94px;left:725.00px;">dNa</span><span style="top:276.94px;left:678.70px;width:200px;text-align:center;">423.199</span><span style="top:291.94px;left:601.50px;">Root diameter utilizable</span><span style="top:291.94px;left:725.00px;">dNf</span><span style="top:291.94px;left:678.70px;width:200px;text-align:center;">389.103</span><span style="top:306.94px;left:601.50px;">Profile shift coeff.</span><span style="top:306.94px;left:725.00px;">x</span><span style="top:306.94px;left:678.70px;width:200px;text-align:center;">0.5000</span><span style="top:322.94px;left:601.50px;">Gen.addend.modif.coeff.</span><span style="top:322.94px;left:725.00px;">xe</span><span style="top:322.94px;left:678.70px;width:200px;text-align:center;">0.486±0.008</span><span style="top:337.94px;left:601.50px;">Normal space width</span><span style="top:337.94px;left:725.00px;">en</span><span style="top:337.94px;left:678.70px;width:200px;text-align:center;">12.068</span><span style="top:352.94px;left:601.50px;">Normal tooth thickn.</span><span style="top:352.94px;left:725.00px;">sn</span><span style="top:352.94px;left:678.70px;width:200px;text-align:center;">19.348</span><span style="top:367.94px;left:601.50px;">Center distance</span><span style="top:367.94px;left:725.00px;">a</span><span style="top:367.94px;left:678.70px;width:200px;text-align:center;">278.206</span><span style="top:383.94px;left:601.50px;">No complem.gear</span><span style="top:383.94px;left:752.50px;">000001</span><span style="top:398.94px;left:601.50px;">No.of teeth complem.gear</span><span style="top:398.94px;left:725.00px;">z</span><span style="top:398.94px;left:678.70px;width:200px;text-align:center;">14</span><span style="top:47.84px;left:374.70px;color:#0ff;">000001  Stirnrad</span><span style="top:59.84px;left:374.70px;color:#0ff;">stage 4</span><span style="top:47.84px;left:597.70px;color:#0ff;">0000002  Stirnrad</span><span style="top:59.84px;left:597.70px;color:#0ff;">stage 4</span><span style="top:428.64px;left:377.40px;">measurement</span><span style="top:443.64px;left:377.40px;">ball diameter</span><span style="top:443.64px;left:495.50px;">DM</span><span style="top:443.64px;left:543.00px;">21.000</span><span style="top:458.64px;left:378.80px;">Dim.ov/betw.balls</span><span style="top:458.64px;left:494.40px;">MK nom</span><span style="top:458.64px;left:543.00px;">186.6996</span><span style="top:473.64px;left:378.80px;">Dim.ov/betw.balls</span><span style="top:473.64px;left:494.40px;">MK max</span><span style="top:473.64px;left:543.00px;">186.605</span><span style="top:489.64px;left:378.80px;">Dim.ov/betw.balls</span><span style="top:489.64px;left:494.40px;">MK min</span><span style="top:489.64px;left:543.00px;">186.521</span><span style="top:504.64px;left:377.40px;">no. of teeth meas.</span><span style="top:504.64px;left:494.40px;">k</span><span style="top:504.64px;left:460.00px;width:200px;text-align:center;">3</span><span style="top:519.64px;left:378.80px;">Span measurement</span><span style="top:519.64px;left:494.40px;">W nom</span><span style="top:519.64px;left:543.00px;">79.3880</span><span style="top:534.64px;left:378.80px;">Span measurement</span><span style="top:534.64px;left:494.40px;">W max</span><span style="top:534.64px;left:543.00px;">79.335</span><span style="top:549.64px;left:378.80px;">Span measurement</span><span style="top:549.64px;left:494.40px;">W min</span><span style="top:549.64px;left:543.00px;">79.288</span><span style="top:428.64px;left:600.40px;">measurement</span><span style="top:443.64px;left:600.40px;">ball diameter</span><span style="top:443.64px;left:718.50px;">DM</span><span style="top:443.64px;left:766.00px;">18.100</span><span style="top:458.64px;left:601.80px;">Dim.ov/betw.balls</span><span style="top:458.64px;left:717.40px;">MK nom</span><span style="top:458.64px;left:766.00px;">428.8888</span><span style="top:473.64px;left:601.80px;">Dim.ov/betw.balls</span><span style="top:473.64px;left:717.40px;">MK max</span><span style="top:473.64px;left:766.00px;">428.725</span><span style="top:489.64px;left:601.80px;">Dim.ov/betw.balls</span><span style="top:489.64px;left:717.40px;">MK min</span><span style="top:489.64px;left:766.00px;">428.594</span><span style="top:504.64px;left:600.40px;">no. of teeth meas.</span><span style="top:504.64px;left:717.40px;">k</span><span style="top:504.64px;left:683.00px;width:200px;text-align:center;">6</span><span style="top:519.64px;left:601.80px;">Span measurement</span><span style="top:519.64px;left:717.40px;">W nom</span><span style="top:519.64px;left:766.00px;">171.6627</span><span style="top:534.64px;left:601.80px;">Span measurement</span><span style="top:534.64px;left:717.40px;">W max</span><span style="top:534.64px;left:766.00px;">171.592</span><span style="top:549.64px;left:601.80px;">Span measurement</span><span style="top:549.64px;left:717.40px;">W min</span><span style="top:549.64px;left:766.00px;">171.536</span><span style="top:580.94px;left:378.80px;">Error messages</span><span style="top:596.94px;left:378.00px;">Warning: SH&lt;1 (1) (0.82) !</span><span style="top:611.94px;left:378.00px;">Warning: SH&lt;1 (2) (0.87) !</span><span style="top:580.94px;left:601.50px;">Dimensions</span><span style="top:596.94px;left:601.00px;">alpha t</span><span style="top:596.94px;left:570.00px;width:200px;text-align:center;">20.65</span><span style="top:611.94px;left:601.00px;">alpha wt</span><span style="top:611.94px;left:570.00px;width:200px;text-align:center;">25.12</span><span style="top:626.94px;left:601.00px;">beta b</span><span style="top:626.94px;left:570.00px;width:200px;text-align:center;">14.08</span><span style="top:642.94px;left:601.00px;">u</span><span style="top:642.94px;left:570.00px;width:200px;text-align:center;">2.71</span><span style="top:657.94px;left:601.00px;">eps.alpha</span><span style="top:657.94px;left:570.00px;width:200px;text-align:center;">1.36</span><span style="top:672.94px;left:601.00px;">eps.beta</span><span style="top:672.94px;left:570.00px;width:200px;text-align:center;">1.24</span><span style="top:688.94px;left:601.00px;">eps.gamma</span><span style="top:688.94px;left:570.00px;width:200px;text-align:center;">2.60</span><span style="top:703.94px;left:601.00px;">jt min</span><span style="top:703.94px;left:570.00px;width:200px;text-align:center;">0.12</span><span style="top:718.94px;left:601.00px;">jt max</span><span style="top:718.94px;left:570.00px;width:200px;text-align:center;">0.27</span><span style="top:580.94px;left:652.00px;width:200px;text-align:center;">1</span><span style="top:580.94px;left:692.60px;width:200px;text-align:center;">2</span><span style="top:596.94px;left:696.70px;">b</span><span style="top:596.94px;left:652.00px;width:200px;text-align:center;">150.00</span><span style="top:596.94px;left:692.60px;width:200px;text-align:center;">150.00</span><span style="top:611.94px;left:696.70px;">zn</span><span style="top:611.94px;left:652.00px;width:200px;text-align:center;">15.41</span><span style="top:611.94px;left:692.60px;width:200px;text-align:center;">41.81</span><span style="top:626.94px;left:696.70px;">sat min</span><span style="top:626.94px;left:652.00px;width:200px;text-align:center;">4.12</span><span style="top:626.94px;left:692.60px;width:200px;text-align:center;">6.69</span><span style="top:642.94px;left:696.70px;">Asne</span><span style="top:642.94px;left:652.00px;width:200px;text-align:center;">-0.06</span><span style="top:642.94px;left:692.60px;width:200px;text-align:center;">-0.08</span><span style="top:657.94px;left:696.70px;">Asni</span><span style="top:657.94px;left:652.00px;width:200px;text-align:center;">-0.11</span><span style="top:657.94px;left:692.60px;width:200px;text-align:center;">-0.14</span><span style="top:672.94px;left:696.70px;">zeta a</span><span style="top:672.94px;left:652.00px;width:200px;text-align:center;">0.58</span><span style="top:672.94px;left:692.60px;width:200px;text-align:center;">0.64</span><span style="top:688.94px;left:696.70px;">zeta f</span><span style="top:688.94px;left:652.00px;width:200px;text-align:center;">-1.80</span><span style="top:688.94px;left:692.60px;width:200px;text-align:center;">-1.37</span><span style="top:714.94px;left:697.70px;">FORCES</span><span style="top:730.94px;left:697.70px;">Ft</span><span style="top:730.94px;left:738.50px;">N</span><span style="top:730.94px;left:686.70px;width:200px;text-align:center;">167753</span><span style="top:745.94px;left:697.70px;">Ftw</span><span style="top:745.94px;left:738.50px;">N</span><span style="top:745.94px;left:686.70px;width:200px;text-align:center;">162306</span><span style="top:760.94px;left:697.70px;">Fxw</span><span style="top:760.94px;left:738.50px;">N</span><span style="top:760.94px;left:686.70px;width:200px;text-align:center;">43490</span><span style="top:776.94px;left:697.70px;">Frw</span><span style="top:776.94px;left:738.50px;">N</span><span style="top:776.94px;left:686.70px;width:200px;text-align:center;">76116</span><span style="top:791.94px;left:697.70px;">Fnw</span><span style="top:791.94px;left:738.50px;">N</span><span style="top:791.94px;left:686.70px;width:200px;text-align:center;">179267</span><span style="top:52.04px;left:831.50px;">Drive</span><span style="top:52.04px;left:827.00px;width:200px;text-align:center;">1</span><span style="top:52.04px;left:881.70px;width:200px;text-align:center;">2</span><span style="top:68.04px;left:831.50px;">P</span><span style="top:68.04px;left:871.60px;">kW</span><span style="top:68.04px;left:834.00px;width:200px;text-align:center;">100.000</span><span style="top:68.04px;left:888.50px;width:200px;text-align:center;">100.000</span><span style="top:83.04px;left:831.50px;">T</span><span style="top:83.04px;left:871.60px;">Nm</span><span style="top:83.04px;left:834.00px;width:200px;text-align:center;">12156.9</span><span style="top:83.04px;left:888.50px;width:200px;text-align:center;">32997.4</span><span style="top:98.04px;left:831.50px;">n</span><span style="top:98.04px;left:871.60px;">1/min</span><span style="top:98.04px;left:834.00px;width:200px;text-align:center;">78.55</span><span style="top:98.04px;left:888.50px;width:200px;text-align:center;">28.94</span><span style="top:128.94px;left:831.00px;">MATERIAL</span><span style="top:128.94px;left:836.30px;width:200px;text-align:center;">17CrNiMo6</span><span style="top:128.94px;left:891.30px;width:200px;text-align:center;">17CrNiMo6</span><span style="top:143.94px;left:831.50px;">Sig.Hlim</span><span style="top:143.94px;left:885.60px;">MPa</span><span style="top:143.94px;left:834.70px;width:200px;text-align:center;">1500</span><span style="top:143.94px;left:891.30px;width:200px;text-align:center;">1500</span><span style="top:158.94px;left:831.50px;">Sigma FE</span><span style="top:158.94px;left:885.60px;">MPa</span><span style="top:158.94px;left:834.70px;width:200px;text-align:center;">800</span><span style="top:158.94px;left:891.30px;width:200px;text-align:center;">800</span><span style="top:174.94px;left:831.50px;">Sig.Flim</span><span style="top:174.94px;left:885.60px;">MPa</span><span style="top:174.94px;left:834.70px;width:200px;text-align:center;">400</span><span style="top:174.94px;left:891.30px;width:200px;text-align:center;">400</span><span style="top:189.94px;left:831.50px;">Tempering:</span><span style="top:189.94px;left:912.50px;">case-hard.</span><span style="top:189.94px;left:967.60px;">case-hard.</span><span style="top:204.94px;left:831.50px;">Brinell</span><span style="top:204.94px;left:885.60px;">HB</span><span style="top:204.94px;left:834.70px;width:200px;text-align:center;">740</span><span style="top:204.94px;left:891.30px;width:200px;text-align:center;">740</span><span style="top:243.94px;left:831.90px;">K FACTORS</span><span style="top:258.94px;left:831.90px;">KA H</span><span style="top:258.94px;left:709.20px;width:200px;text-align:right;">1.00</span><span style="top:273.94px;left:831.90px;">KA F</span><span style="top:273.94px;left:709.20px;width:200px;text-align:right;">1.00</span><span style="top:289.94px;left:831.90px;">Kv</span><span style="top:289.94px;left:709.20px;width:200px;text-align:right;">1.00</span><span style="top:304.94px;left:831.90px;">KH-beta</span><span style="top:304.94px;left:709.20px;width:200px;text-align:right;">2.00</span><span style="top:319.94px;left:831.90px;">KF-beta</span><span style="top:319.94px;left:709.20px;width:200px;text-align:right;">1.81</span><span style="top:335.94px;left:831.90px;">KH-alpha</span><span style="top:335.94px;left:709.20px;width:200px;text-align:right;">1.00</span><span style="top:350.94px;left:831.90px;">KF-alpha</span><span style="top:350.94px;left:709.20px;width:200px;text-align:right;">1.00</span><span style="top:243.94px;left:932.70px;">Z FACTORS</span><span style="top:258.94px;left:932.70px;">ZH</span><span style="top:258.94px;left:811.80px;width:200px;text-align:right;">2.17</span><span style="top:273.94px;left:932.70px;">ZB</span><span style="top:273.94px;left:811.80px;width:200px;text-align:right;">1.06</span><span style="top:289.94px;left:932.70px;">ZE</span><span style="top:289.94px;left:811.80px;width:200px;text-align:right;">192</span><span style="top:304.94px;left:932.70px;">Z eps.</span><span style="top:304.94px;left:811.80px;width:200px;text-align:right;">0.86</span><span style="top:319.94px;left:932.70px;">Z beta</span><span style="top:319.94px;left:811.80px;width:200px;text-align:right;">0.98</span><span style="top:383.94px;left:831.30px;">FLANK LOAD-BEARING CAPACITY</span><span style="top:398.94px;left:831.30px;">ZL</span><span style="top:398.94px;left:925.00px;">1.00</span><span style="top:398.94px;left:980.20px;">1.00</span><span style="top:413.94px;left:831.30px;">Zv</span><span style="top:413.94px;left:925.00px;">0.95</span><span style="top:413.94px;left:980.20px;">0.95</span><span style="top:429.94px;left:831.30px;">ZR</span><span style="top:429.94px;left:925.00px;">0.99</span><span style="top:429.94px;left:980.20px;">0.99</span><span style="top:444.94px;left:831.30px;">ZW</span><span style="top:444.94px;left:925.00px;">1.00</span><span style="top:444.94px;left:980.20px;">1.00</span><span style="top:459.94px;left:831.30px;">ZX</span><span style="top:459.94px;left:925.00px;">1.00</span><span style="top:459.94px;left:980.20px;">1.00</span><span style="top:474.94px;left:831.30px;">Sigma-HG</span><span style="top:474.94px;left:885.70px;">MPa</span><span style="top:474.94px;left:925.00px;">1404</span><span style="top:474.94px;left:980.20px;">1404</span><span style="top:490.94px;left:831.30px;">Sigma-HC</span><span style="top:490.94px;left:885.70px;">MPa</span><span style="top:490.94px;left:925.00px;">1615</span><span style="top:505.94px;left:831.30px;">Sigma-HB</span><span style="top:505.94px;left:885.70px;">MPa</span><span style="top:505.94px;left:925.00px;">1717</span><span style="top:505.94px;left:980.20px;">1615</span><span style="top:521.94px;left:831.30px;">SH</span><span style="top:521.94px;left:925.00px;">0.82</span><span style="top:521.94px;left:980.20px;">0.87</span><span style="top:574.94px;left:831.20px;">TOOTH ROOT LOAD-BEARING CAPACITY</span><span style="top:589.94px;left:831.20px;">YF</span><span style="top:589.94px;left:834.50px;width:200px;text-align:center;">1.32</span><span style="top:589.94px;left:889.50px;width:200px;text-align:center;">1.38</span><span style="top:604.94px;left:831.20px;">YS</span><span style="top:604.94px;left:834.50px;width:200px;text-align:center;">2.36</span><span style="top:604.94px;left:889.50px;width:200px;text-align:center;">2.45</span><span style="top:620.94px;left:831.20px;">Y beta</span><span style="top:620.94px;left:834.50px;width:200px;text-align:center;">0.88</span><span style="top:635.94px;left:831.20px;">YdrelT</span><span style="top:635.94px;left:834.50px;width:200px;text-align:center;">0.99</span><span style="top:635.94px;left:889.50px;width:200px;text-align:center;">0.99</span><span style="top:651.94px;left:831.20px;">YRrelT</span><span style="top:651.94px;left:834.50px;width:200px;text-align:center;">1.04</span><span style="top:651.94px;left:889.50px;width:200px;text-align:center;">1.04</span><span style="top:666.94px;left:831.20px;">YX</span><span style="top:666.94px;left:834.50px;width:200px;text-align:center;">0.95</span><span style="top:666.94px;left:889.50px;width:200px;text-align:center;">0.95</span><span style="top:681.94px;left:831.20px;">Np</span><span style="top:681.94px;left:834.50px;width:200px;text-align:center;">0</span><span style="top:681.94px;left:889.50px;width:200px;text-align:center;">0</span><span style="top:697.94px;left:831.20px;">e</span><span style="top:697.94px;left:834.50px;width:200px;text-align:center;">1</span><span style="top:697.94px;left:889.50px;width:200px;text-align:center;">1</span><span style="top:712.94px;left:831.20px;">YA</span><span style="top:712.94px;left:834.50px;width:200px;text-align:center;">1.00</span><span style="top:712.94px;left:889.50px;width:200px;text-align:center;">1.00</span><span style="top:727.94px;left:831.20px;">Sigma-FG</span><span style="top:727.94px;left:886.20px;">MPa</span><span style="top:727.94px;left:834.50px;width:200px;text-align:center;">784</span><span style="top:727.94px;left:889.50px;width:200px;text-align:center;">786</span><span style="top:743.94px;left:831.20px;">Sigma-F</span><span style="top:743.94px;left:886.20px;">MPa</span><span style="top:743.94px;left:834.50px;width:200px;text-align:center;">550</span><span style="top:743.94px;left:889.50px;width:200px;text-align:center;">597</span><span style="top:758.94px;left:831.20px;">SF</span><span style="top:758.94px;left:834.50px;width:200px;text-align:center;">1.42</span><span style="top:758.94px;left:889.50px;width:200px;text-align:center;">1.32</span><span style="top:774.24px;left:375.20px;color:#0ff;letter-spacing:-0.18px;">Anwendungsbeispiel</span><span style="top:787.04px;left:375.20px;color:#0ff;">zur Demoversion</span><span style="top:800.77px;left:11.00px;color:#fff;font-size:7px;letter-spacing:0.75px;filter:url(#thg);">12/18/2013 8:43 - HEXAGON ZAR1+ V21.1 #0560 - Hyaesung Precision Co. - H:\APPS\TP\TRAIN\0multi.zar</span><span style="top:215.04px;left:17.00px;color:#ff0;letter-spacing:-0.12px;">mn =  10</span><span style="top:215.04px;left:127.00px;color:#ff0;letter-spacing:-0.12px;">z1  =  14</span><span style="top:215.04px;left:246.00px;color:#ff0;letter-spacing:-0.12px;">z2  =  38</span><span style="top:227.04px;left:17.00px;color:#ff0;letter-spacing:-0.12px;">alpha= 20°</span><span style="top:227.04px;left:127.00px;color:#ff0;letter-spacing:-0.12px;">dw1 = 149.80</span><span style="top:227.04px;left:246.00px;color:#ff0;letter-spacing:-0.12px;">dw2 = 406.61</span><span style="top:239.04px;left:17.00px;color:#ff0;letter-spacing:-0.12px;">beta = 15°</span><span style="top:239.04px;left:127.00px;color:#ff0;letter-spacing:-0.12px;">df1 = 129.72</span><span style="top:239.04px;left:246.00px;color:#ff0;letter-spacing:-0.12px;">df2 = 378.12</span><span style="top:251.04px;left:17.00px;color:#ff0;letter-spacing:-0.12px;">a = 278.206</span><span style="top:251.04px;left:127.00px;color:#ff0;letter-spacing:-0.12px;">da1 = 174.72</span><span style="top:251.04px;left:246.00px;color:#ff0;letter-spacing:-0.12px;">da2 = 423.12</span><span style="top:263.04px;left:17.00px;color:#ff0;letter-spacing:-0.12px;">eps.al. = 1.359</span><span style="top:263.04px;left:127.00px;color:#ff0;letter-spacing:-0.12px;">db1 = 135.63</span><span style="top:263.04px;left:246.00px;color:#ff0;letter-spacing:-0.12px;">db2 = 368.14</span><span style="top:275.04px;left:17.00px;color:#ff0;letter-spacing:-0.12px;">phi = 7.12°</span><span style="top:275.04px;left:127.00px;color:#ff0;letter-spacing:-0.12px;">xe1 = 0.489</span><span style="top:275.04px;left:246.00px;color:#ff0;letter-spacing:-0.12px;">xe2 = 0.486</span>
</div></div>
</body></html>
